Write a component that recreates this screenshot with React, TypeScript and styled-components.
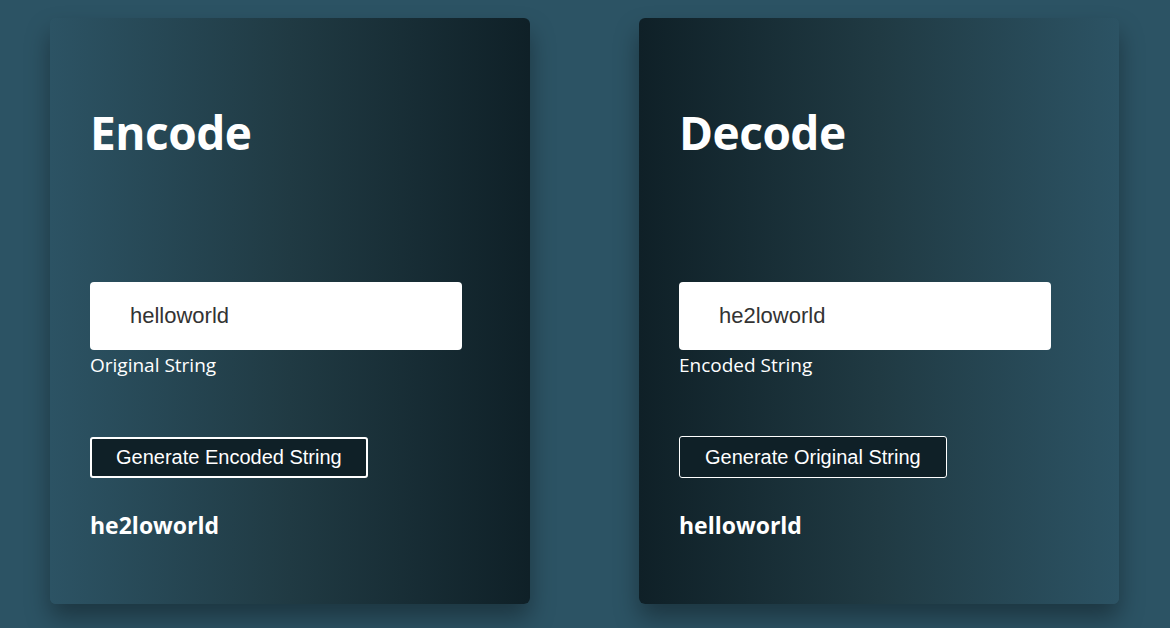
import styled, { createGlobalStyle } from 'styled-components';

const GlobalStyle = createGlobalStyle`
  body {
    margin: 0;
    background: #2c5364;
    font-family: 'Open Sans', 'Noto Sans', sans-serif;
  }
`;

type CardProps = {
  title: string;
  value: string;
  label: string;
  action: string;
  result: string;
  reverse?: boolean;
};

const Card: React.FC<CardProps> = ({ title, value, label, action, result, reverse }) => (
  <CardWrapper $reverse={reverse}>
    <Title>{title}</Title>
    <Field>
      <Input defaultValue={value} />
      <Label>{label}</Label>
    </Field>
    <Button $thick={!reverse}>{action}</Button>
    <Result>{result}</Result>
  </CardWrapper>
);

export default function App() {
  return (
    <>
      <GlobalStyle />
      <Page>
        <Card
          title="Encode"
          value="helloworld"
          label="Original String"
          action="Generate Encoded String"
          result="he2loworld"
        />
        <Card
          title="Decode"
          value="he2loworld"
          label="Encoded String"
          action="Generate Original String"
          result="helloworld"
          reverse
        />
      </Page>
    </>
  );
}

const Page = styled.div`
  display: flex;
  justify-content: center;
  gap: 109px;
  padding-top: 18px;
  padding-right: 1px;
  height: 628px;
  box-sizing: border-box;
  overflow: hidden;
`;

const CardWrapper = styled.div<{ $reverse?: boolean }>`
  width: 480px;
  height: 586px;
  box-sizing: border-box;
  padding: 0 40px;
  border-radius: 6px;
  background: linear-gradient(
    ${(p) => (p.$reverse ? 'to left' : 'to right')},
    #2c5364,
    #203a43,
    #0f2027
  );
  box-shadow: 0 14px 24px rgba(0, 0, 0, 0.35);
  color: #fff;
`;

const Title = styled.h1`
  margin: 0;
  padding-top: 82px;
  font-size: 46px;
  font-weight: 700;
  line-height: 64px;
  letter-spacing: -0.5px;
`;

const Field = styled.div`
  margin-top: 118px;
`;

const Input = styled.input`
  display: block;
  width: 372px;
  height: 68px;
  box-sizing: border-box;
  border: none;
  border-radius: 4px;
  padding: 0 0 0 40px;
  font-family: 'Liberation Sans', Arial, sans-serif;
  font-size: 22px;
  color: #333;
  background: #fff;
  outline: none;
`;

const Label = styled.div`
  margin-top: 3px;
  font-size: 19px;
  line-height: 24px;
`;

const Button = styled.button<{ $thick?: boolean }>`
  display: block;
  margin-top: ${(p) => (p.$thick ? '60px' : '59px')};
  height: ${(p) => (p.$thick ? '41px' : '42px')};
  padding: 0 ${(p) => (p.$thick ? '24px' : '25px')};
  border: ${(p) => (p.$thick ? '2px' : '1px')} solid #fff;
  border-radius: 3px;
  background: #0f2027;
  color: #fff;
  font-family: 'Liberation Sans', Arial, sans-serif;
  font-size: 20px;
  cursor: pointer;
`;

const Result = styled.p`
  margin: 32px 0 0;
  font-size: 23px;
  font-weight: 700;
  line-height: 30px;
`;
